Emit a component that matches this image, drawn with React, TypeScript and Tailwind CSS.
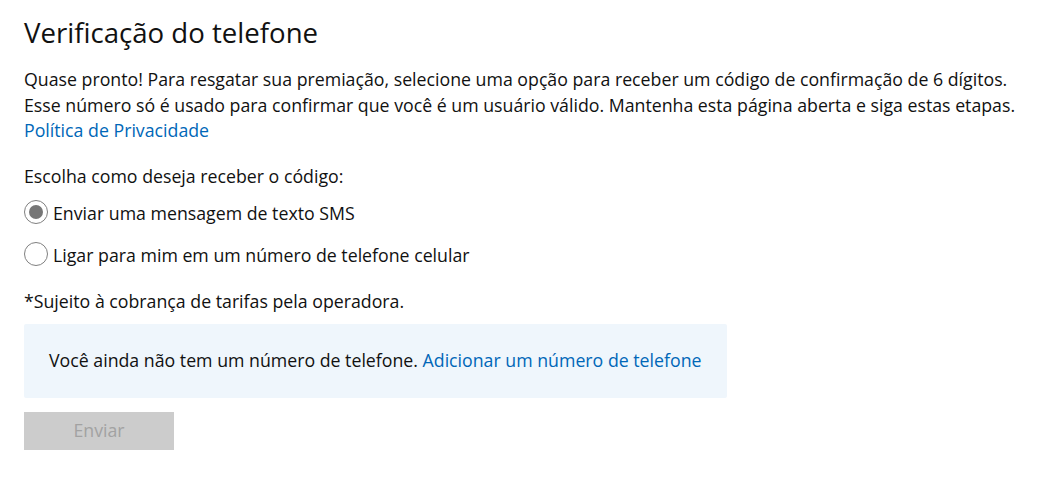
import React from "react";

function Radio({ checked, label }: { checked?: boolean; label: string }) {
  return (
    <label className="flex items-center h-[42px]">
      <span className="w-[24px] h-[24px] rounded-full border-[1.5px] border-[#7f7f7f] bg-white flex items-center justify-center mr-[5px] mb-[5px] shrink-0">
        {checked && <span className="w-[14px] h-[14px] rounded-full bg-[#767676]" />}
      </span>
      <span>{label}</span>
    </label>
  );
}

export default function App() {
  return (
    <div className="bg-white w-[1057px] h-[477px] px-[24px] pt-[14px] text-[17.74px] leading-[25.5px] text-[#111] font-['Open_Sans','Noto_Sans',sans-serif]">
      <h1 className="text-[27.6px] leading-[36px] font-normal text-[#111]">Verificação do telefone</h1>
      <div className="mt-[17px]">
        <p>Quase pronto! Para resgatar sua premiação, selecione uma opção para receber um código de confirmação de 6 dígitos.</p>
        <p>Esse número só é usado para confirmar que você é um usuário válido. Mantenha esta página aberta e siga estas etapas.</p>
        <a href="#" className="text-[#0067b8]">Política de Privacidade</a>
      </div>
      <div className="mt-[20px]">
        <p>Escolha como deseja receber o código:</p>
        <div className="mt-[4px]">
          <Radio checked label="Enviar uma mensagem de texto SMS" />
          <Radio label="Ligar para mim em um número de telefone celular" />
        </div>
        <p className="mt-[12px]">*Sujeito à cobrança de tarifas pela operadora.</p>
      </div>
      <div className="mt-[9px] w-[703px] h-[74px] bg-[#eff6fc] rounded-[2px] flex items-center px-[25px]">
        <span>Você ainda não tem um número de telefone.&nbsp;</span>
        <a href="#" className="text-[#0067b8]">Adicionar um número de telefone</a>
      </div>
      <button className="mt-[14px] w-[150px] h-[38px] bg-[#cccccc] text-[#a2a2a2]">Enviar</button>
    </div>
  );
}
